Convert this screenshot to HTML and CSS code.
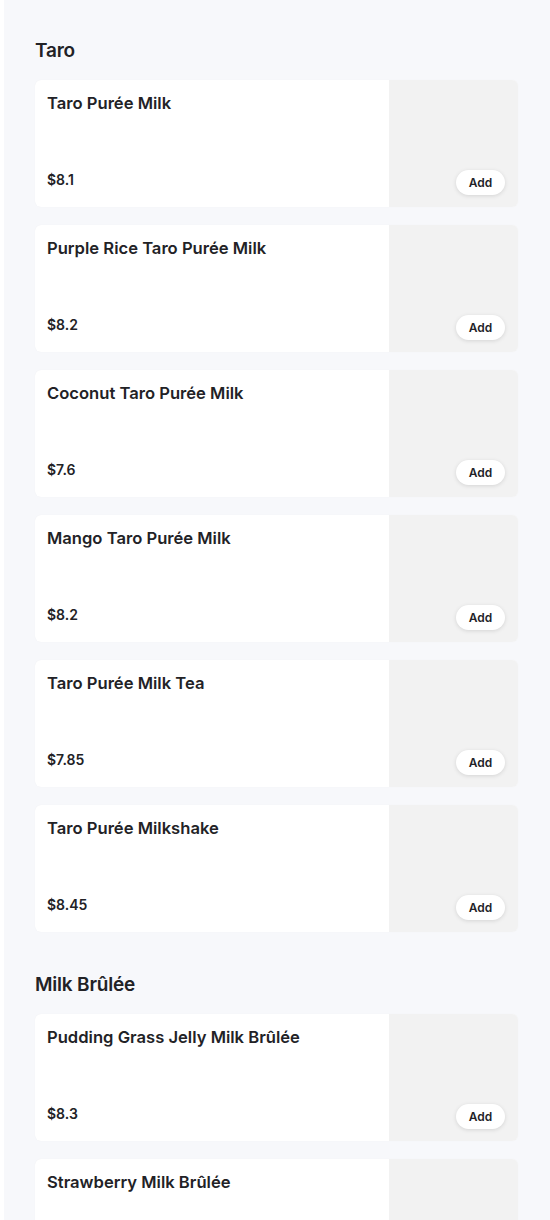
FILE: index.html
```html
<!DOCTYPE html>
<html lang="en">
<head>
  <meta charset="UTF-8">
  <meta name="viewport" content="width=device-width, initial-scale=1.0">
  <link rel="stylesheet" href="styles.css">
  <title>Menu</title>
</head>
<body>

  <main class="menu">

    <section class="category">
      <h2>Taro</h2>
      <div class="items">
        <div class="item">
          <div class="info">
            <h3>Taro Purée Milk</h3>
            <p class="price">$8.1</p>
          </div>
          <div class="photo"><button class="add">Add</button></div>
        </div>
        <div class="item">
          <div class="info">
            <h3>Purple Rice Taro Purée Milk</h3>
            <p class="price">$8.2</p>
          </div>
          <div class="photo"><button class="add">Add</button></div>
        </div>
        <div class="item">
          <div class="info">
            <h3>Coconut Taro Purée Milk</h3>
            <p class="price">$7.6</p>
          </div>
          <div class="photo"><button class="add">Add</button></div>
        </div>
        <div class="item">
          <div class="info">
            <h3>Mango Taro Purée Milk</h3>
            <p class="price">$8.2</p>
          </div>
          <div class="photo"><button class="add">Add</button></div>
        </div>
        <div class="item">
          <div class="info">
            <h3>Taro Purée Milk Tea</h3>
            <p class="price">$7.85</p>
          </div>
          <div class="photo"><button class="add">Add</button></div>
        </div>
        <div class="item">
          <div class="info">
            <h3>Taro Purée Milkshake</h3>
            <p class="price">$8.45</p>
          </div>
          <div class="photo"><button class="add">Add</button></div>
        </div>
      </div>
    </section>

    <section class="category">
      <h2>Milk Brûlée</h2>
      <div class="items">
        <div class="item">
          <div class="info">
            <h3>Pudding Grass Jelly Milk Brûlée</h3>
            <p class="price">$8.3</p>
          </div>
          <div class="photo"><button class="add">Add</button></div>
        </div>
        <div class="item">
          <div class="info">
            <h3>Strawberry Milk Brûlée</h3>
            <p class="price">$8.3</p>
          </div>
          <div class="photo"><button class="add">Add</button></div>
        </div>
      </div>
    </section>

  </main>

</body>
</html>
```

FILE: styles.css
```css
body {
  margin: 0;
  padding: 0;
  background-color: #ffffff;
  font-family: Inter, "Noto Sans", sans-serif;
  color: #222226;
}

.menu {
  margin-left: 4px;
  padding: 39px 32px 40px 31px;
  background-color: #f7f8fb;
  min-height: 1220px;
  box-sizing: border-box;
}

.category {
  margin-bottom: 41px;
}

.category h2 {
  margin: 0 0 17px 0;
  font-size: 19px;
  line-height: 24px;
  font-weight: 600;
  letter-spacing: -0.2px;
}

.items {
  display: flex;
  flex-direction: column;
  gap: 18px;
}

.item {
  display: flex;
  height: 127px;
  background-color: #ffffff;
  border-radius: 6px;
  overflow: hidden;
  box-shadow: 0 0 1px rgba(0, 0, 0, 0.06);
}

.info {
  flex: 1;
  display: flex;
  flex-direction: column;
  justify-content: space-between;
  padding: 13px 12px 18px 12px;
}

.info h3 {
  margin: 0;
  font-size: 16.6px;
  line-height: 20px;
  font-weight: 600;
}

.price {
  margin: 0;
  font-size: 14px;
  line-height: 18px;
  font-weight: 600;
}

.photo {
  position: relative;
  width: 129px;
  background-color: #f2f2f2;
}

.add {
  position: absolute;
  right: 13px;
  bottom: 12px;
  width: 49px;
  height: 25px;
  padding: 0;
  border: none;
  border-radius: 13px;
  background-color: #ffffff;
  box-shadow: 0 1px 4px rgba(0, 0, 0, 0.12);
  font-family: Inter, "Noto Sans", sans-serif;
  font-size: 12px;
  font-weight: 600;
  color: #222226;
  cursor: pointer;
}
```
